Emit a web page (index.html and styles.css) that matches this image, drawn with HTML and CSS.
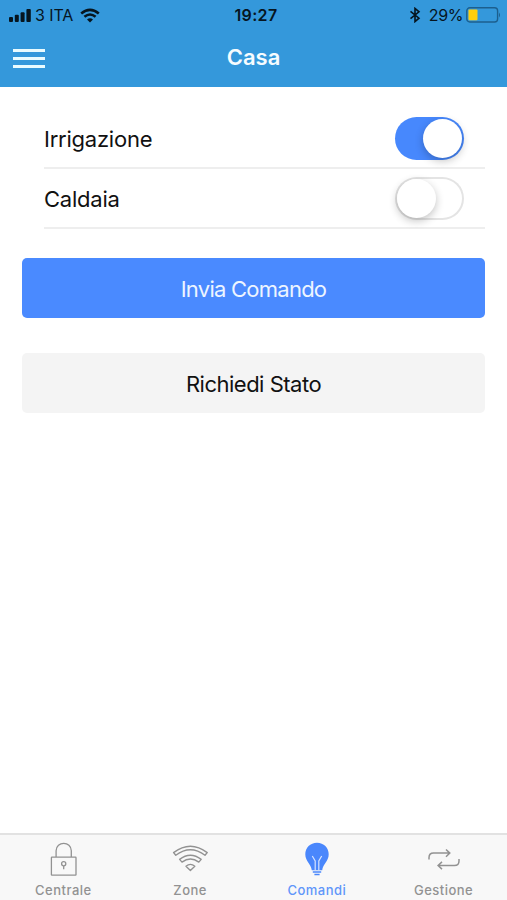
FILE: index.html
```html
<!DOCTYPE html>
<html lang="it">
<head>
<meta charset="utf-8">
<title>Casa</title>
<link rel="stylesheet" href="styles.css">
</head>
<body>
<header class="header">
  <div class="status">
    <div class="status-left">
      <svg class="signal" width="23" height="15" viewBox="0 0 23 15"><rect x="0" y="9" width="4" height="5" rx="1"/><rect x="5.8" y="6.8" width="4" height="7.2" rx="1"/><rect x="11.6" y="4.3" width="4" height="9.7" rx="1"/><rect x="17.4" y="1" width="4.4" height="13" rx="1"/></svg>
      <span class="carrier">3 ITA</span>
      <svg class="wifi" width="20" height="15" viewBox="0 0 20 15"><g fill="none" stroke="#06151f" stroke-width="2.6"><path d="M1.2 5.6Q10 -1.7 18.8 5.6"/><path d="M4.4 8.8Q10 4.2 15.6 8.8"/></g><path d="M7 11.4Q10 9 13 11.4L10 14.4Z"/></svg>
    </div>
    <span class="clock">19:27</span>
    <div class="status-right">
      <svg class="bluetooth" width="12" height="16" viewBox="0 0 12 16"><path d="M1.5 4.3L10 11.2L6 14.6V1.4L10 4.8L1.5 11.7" fill="none" stroke="#06151f" stroke-width="1.6"/></svg>
      <span class="percent">29%</span>
      <svg class="battery" width="35" height="16" viewBox="0 0 35 16"><rect x=".8" y=".8" width="30.8" height="14.2" rx="3" fill="none" stroke="#1c5f8e" stroke-width="1.4"/><rect x="2.5" y="2.5" width="9" height="10.8" rx="1" fill="#ffcf0d"/><path d="M33 5.5Q35 8 33 10.5Z" fill="#1c5f8e"/></svg>
    </div>
  </div>
  <div class="navbar">
    <button class="menu" aria-label="Menu"><span></span><span></span><span></span></button>
    <h1 class="title">Casa</h1>
  </div>
</header>
<main class="content">
  <div class="list">
    <div class="row"><span class="label">Irrigazione</span><span class="toggle on"><span class="knob"></span></span></div>
    <div class="row"><span class="label">Caldaia</span><span class="toggle"><span class="knob"></span></span></div>
  </div>
  <button class="button primary">Invia Comando</button>
  <button class="button light">Richiedi Stato</button>
</main>
<nav class="tabs">
  <a class="tab"><svg width="38" height="38" viewBox="0 0 38 38"><g fill="none" stroke="#929292" stroke-width="1.3"><rect x="7.4" y="17.2" width="24.6" height="18" rx=".5"/><path d="M12.1 17.1V10.8C12.1 .8 27.3 .8 27.3 10.8V17.1"/><circle cx="19.7" cy="23.8" r="2.1"/><path d="M19.7 25.9V29.3"/></g></svg><span>Centrale</span></a>
  <a class="tab"><svg width="38" height="38" viewBox="0 0 38 38"><g fill="none" stroke="#929292" stroke-width="1.4" stroke-linejoin="round"><path d="M2.6 12.6Q19.4 -.2 36.2 12.6L34 15.3Q19.4 4.2 4.8 15.3Z"/><path d="M8.6 19.4Q19.4 11 30.2 19.4L27.8 22.1Q19.4 16 11 22.1Z"/><path d="M15 26.2Q19.4 22.6 23.8 26.2L19.4 30.4Z"/></g></svg><span>Zone</span></a>
  <a class="tab active"><svg width="38" height="38" viewBox="0 0 38 38"><path d="M19 2.7C12.2 2.7 7.3 7.7 7.3 14.3C7.3 21.3 13 23.8 13.8 30.2H24.2C25 23.8 30.7 21.3 30.7 14.3C30.7 7.7 25.8 2.7 19 2.7Z" fill="#4a87fc"/><path d="M14.3 16L17.2 21V30.2M23.7 16L20.8 21V30.2" fill="none" stroke="#d5e3ff" stroke-width="1.2"/><path d="M14.8 32.1H23.2M16.4 34.6H21.6" stroke="#4a87fc" stroke-width="1.5"/></svg><span>Comandi</span></a>
  <a class="tab"><svg width="38" height="38" viewBox="0 0 38 38"><g fill="none" stroke="#929292" stroke-width="1.5"><path d="M4 19.5V17.7Q4 13.1 8.6 13.1H24.5M21 9.5L24.8 13.1L21 16.7"/><path d="M34 19V20.9Q34 25.5 29.4 25.5H13.3M17 21.9L13.1 25.5L17 29.1"/></g></svg><span>Gestione</span></a>
</nav>
</body>
</html>
```
FILE: styles.css
```css
* { box-sizing: border-box; }
body {
  margin: 0;
  height: 900px;
  display: flex;
  flex-direction: column;
  overflow: hidden;
  background: #fff;
  color: #111;
  font-family: Inter, "Liberation Sans", sans-serif;
}
button { border: 0; padding: 0; font: inherit; }
svg { display: block; flex: none; }
.header { height: 87px; background: #3498db; }
.status {
  height: 29px;
  padding: 0 6px 0 9px;
  display: grid;
  grid-template-columns: 1fr auto 1fr;
  align-items: center;
  color: #06151f;
  fill: #06151f;
  font-size: 16px;
  line-height: 30px;
}
.status-left, .status-right { display: flex; align-items: center; }
.status-right { justify-content: flex-end; }
.carrier { margin-left: 3px; letter-spacing: -0.1px; }
.wifi { margin-left: 7px; }
.clock { padding-left: 2px; font-weight: 600; letter-spacing: 0.35px; }
.percent { margin: 0 3px 0 8px; letter-spacing: -0.4px; }
.navbar {
  height: 58px;
  display: grid;
  grid-template-columns: 45px 1fr 45px;
  align-items: center;
}
.menu {
  margin-left: 13px;
  width: 32px;
  display: flex;
  flex-direction: column;
  gap: 5px;
  background: none;
}
.menu span { height: 3px; background: #e9fbff; }
.title {
  margin: 0;
  color: #f6fcff;
  font-size: 22px;
  line-height: 54px;
  padding-bottom: 2px;
  font-weight: 600;
  text-align: center;
}
.content { flex: 1; padding: 22px 22px 0 22px; display: flex; flex-direction: column; }
.list { padding-left: 22px; }
.row {
  height: 60px;
  padding-right: 21px;
  display: flex;
  justify-content: space-between;
  align-items: center;
  border-bottom: 2px solid #eee;
}
.label { padding-top: 1px; font-size: 22px; line-height: 30px; letter-spacing: -0.23px; }
.toggle {
  width: 69px;
  height: 43px;
  padding: 2px;
  border-radius: 22px;
  background: #fff;
  box-shadow: inset 0 0 0 2px #e4e4e4;
}
.toggle.on { background: #4788fd; box-shadow: none; padding-left: 28px; }
.knob {
  display: block;
  width: 39px;
  height: 39px;
  border-radius: 50%;
  background: #fff;
  box-shadow: 0 3px 8px rgba(0, 0, 0, .24);
}
.button {
  height: 60px;
  padding-top: 2px;
  border-radius: 5px;
  font-size: 22px;
}
.primary { margin-top: 29px; background: #4a8aff; color: #edf5ff; letter-spacing: -0.75px; }
.light { margin-top: 35px; background: #f4f4f4; color: #111; letter-spacing: -0.5px; }
.tabs {
  height: 67px;
  display: grid;
  grid-template-columns: repeat(4, 1fr);
  background: #f8f8f8;
  border-top: 2px solid #e2e2e2;
}
.tab {
  padding-top: 5px;
  display: flex;
  flex-direction: column;
  align-items: center;
  color: #929292;
  font-size: 13px;
  line-height: 16px;
  font-weight: 500;
  letter-spacing: 0.48px;
}
.tab span { margin-top: 4px; }
.active { color: #5f96fa; }
```
